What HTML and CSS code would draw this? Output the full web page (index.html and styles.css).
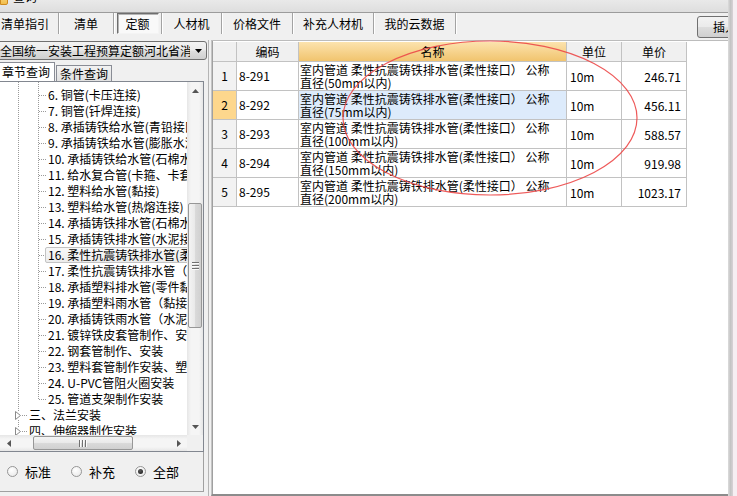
FILE: index.html
```html
<!DOCTYPE html>
<html lang="zh-CN">
<head>
<meta charset="utf-8">
<title>查询</title>
<link rel="stylesheet" href="styles.css">
</head>
<body>
<div class="screen">
  <div class="window">
    <div class="titlebar">
      <span class="app-icon"></span>
      <span class="title-text">查询</span>
    </div>
    <div class="tabbar">
      <div class="tab t1">清单指引</div>
      <div class="tab t2">清单</div>
      <div class="tab t3"><span class="tab-pressed">定额</span></div>
      <div class="tab t4">人材机</div>
      <div class="tab t5">价格文件</div>
      <div class="tab t6">补充人材机</div>
      <div class="tab t7">我的云数据</div>
      <button class="insert-btn">插入</button>
    </div>
    <div class="main">
      <div class="left">
        <div class="combo">
          <span class="combo-text">全国统一安装工程预算定额河北省消耗量定额</span>
          <svg class="combo-arrow" width="7" height="4" viewBox="0 0 7 4"><polygon points="0,0 7,0 3.5,4" fill="#000"/></svg>
        </div>
        <div class="subtabs">
          <div class="subtab active">章节查询</div>
          <div class="subtab">条件查询</div>
        </div>
        <div class="treebox">
          <div class="tree-row">
            <div class="tree-view">
              <div class="children">
                <div class="leaf">6. 铜管(卡压连接)</div>
                <div class="leaf">7. 铜管(钎焊连接)</div>
                <div class="leaf">8. 承插铸铁给水管(青铅接口)</div>
                <div class="leaf">9. 承插铸铁给水管(膨胀水泥接口)</div>
                <div class="leaf">10. 承插铸铁给水管(石棉水泥接口)</div>
                <div class="leaf">11. 给水复合管(卡箍、卡套连接)</div>
                <div class="leaf">12. 塑料给水管(黏接)</div>
                <div class="leaf">13. 塑料给水管(热熔连接)</div>
                <div class="leaf">14. 承插铸铁排水管(石棉水泥接口)</div>
                <div class="leaf">15. 承插铸铁排水管(水泥接口)</div>
                <div class="leaf selected"><span class="sel">16. 柔性抗震铸铁排水管(柔性接口)</span></div>
                <div class="leaf">17. 柔性抗震铸铁排水管（法兰接口）</div>
                <div class="leaf">18. 承插塑料排水管(零件黏接)</div>
                <div class="leaf">19. 承插塑料雨水管（黏接）</div>
                <div class="leaf">20. 承插铸铁雨水管（水泥接口）</div>
                <div class="leaf">21. 镀锌铁皮套管制作、安装</div>
                <div class="leaf">22. 钢套管制作、安装</div>
                <div class="leaf">23. 塑料套管制作安装、塑料管</div>
                <div class="leaf">24. U-PVC管阻火圈安装</div>
                <div class="leaf">25. 管道支架制作安装</div>
              </div>
              <div class="node">
                <svg class="expander" width="6" height="9" viewBox="0 0 6 9"><polygon points="0.5,0.5 5.5,4.5 0.5,8.5" fill="#fff" stroke="#8a8a8a"/></svg>
                <span class="node-dots"></span>
                <span class="node-text">三、法兰安装</span>
              </div>
              <div class="node">
                <svg class="expander" width="6" height="9" viewBox="0 0 6 9"><polygon points="0.5,0.5 5.5,4.5 0.5,8.5" fill="#fff" stroke="#8a8a8a"/></svg>
                <span class="node-dots"></span>
                <span class="node-text">四、伸缩器制作安装</span>
              </div>
            </div>
            <div class="vscroll">
              <div class="sbtn"><svg width="7" height="4" viewBox="0 0 7 4"><polygon points="0,4 7,4 3.5,0" fill="#555"/></svg></div>
              <div class="vtrack-a"></div>
              <div class="vthumb"><span class="vgrip"></span></div>
              <div class="vtrack-b"></div>
              <div class="sbtn"><svg width="7" height="4" viewBox="0 0 7 4"><polygon points="0,0 7,0 3.5,4" fill="#555"/></svg></div>
            </div>
          </div>
          <div class="hscroll-row">
            <div class="hscroll">
              <div class="sbtn-h"><svg width="4" height="7" viewBox="0 0 4 7"><polygon points="4,0 4,7 0,3.5" fill="#555"/></svg></div>
              <div class="htrack-a"></div>
              <div class="hthumb"><span class="hgrip"></span></div>
              <div class="htrack-b"></div>
              <div class="sbtn-h"><svg width="4" height="7" viewBox="0 0 4 7"><polygon points="0,0 0,7 4,3.5" fill="#555"/></svg></div>
            </div>
            <div class="corner"></div>
          </div>
        </div>
        <div class="radios">
          <label class="radio"><span class="circle"></span><span>标准</span></label>
          <label class="radio"><span class="circle"></span><span>补充</span></label>
          <label class="radio"><span class="circle checked"><span class="pip"></span></span><span>全部</span></label>
        </div>
      </div>
      <div class="right">
        <div class="gridwrap">
          <table class="grid">
            <colgroup>
              <col class="c-num"><col class="c-code"><col class="c-name"><col class="c-unit"><col class="c-price">
            </colgroup>
            <thead>
              <tr><th></th><th>编码</th><th class="sorted">名称</th><th>单位</th><th>单价</th></tr>
            </thead>
            <tbody>
              <tr><td class="num">1</td><td class="code">8-291</td><td class="name">室内管道 柔性抗震铸铁排水管(柔性接口） 公称<br>直径(50mm以内)</td><td class="unit">10m</td><td class="price">246.71</td></tr>
              <tr class="current"><td class="num">2</td><td class="code">8-292</td><td class="name">室内管道 柔性抗震铸铁排水管(柔性接口） 公称<br>直径(75mm以内)</td><td class="unit">10m</td><td class="price">456.11</td></tr>
              <tr><td class="num">3</td><td class="code">8-293</td><td class="name">室内管道 柔性抗震铸铁排水管(柔性接口） 公称<br>直径(100mm以内)</td><td class="unit">10m</td><td class="price">588.57</td></tr>
              <tr><td class="num">4</td><td class="code">8-294</td><td class="name">室内管道 柔性抗震铸铁排水管(柔性接口） 公称<br>直径(150mm以内)</td><td class="unit">10m</td><td class="price">919.98</td></tr>
              <tr><td class="num">5</td><td class="code">8-295</td><td class="name">室内管道 柔性抗震铸铁排水管(柔性接口） 公称<br>直径(200mm以内)</td><td class="unit">10m</td><td class="price">1023.17</td></tr>
            </tbody>
          </table>
        </div>
      </div>
    </div>
  </div>
  <div class="edge"></div>
  <div class="desk"></div>
  <svg class="annot" width="737" height="496" viewBox="0 0 737 496">
    <ellipse cx="490" cy="118" rx="147" ry="77" fill="none" stroke="#ec4848" stroke-width="1.2" stroke-opacity="0.9"/>
  </svg>
</div>
</body>
</html>
```

FILE: styles.css
```css
* { box-sizing: border-box; }

html, body {
  margin: 0;
  padding: 0;
}

body {
  background: #f6eef2;
  font-family: "Noto Sans CJK SC", "Noto Sans", sans-serif;
  font-size: 12px;
  color: #000;
}

.screen {
  position: relative;
  width: 737px;
  height: 496px;
  display: flex;
  overflow: hidden;
}

.window {
  width: 728px;
  height: 496px;
  flex: none;
  background: #f0f0f0;
  display: flex;
  flex-direction: column;
  overflow: hidden;
}

.edge {
  width: 5px;
  flex: none;
  background: linear-gradient(to right, #dcdcdc, #c4c4c4 50%, #d8d2d6);
}

.desk {
  flex: 1;
  background: #f6eef2;
}

/* title bar */
.titlebar {
  height: 13px;
  flex: none;
  border-bottom: 1px solid #9c9c9c;
  background: linear-gradient(#e9e9e9, #dedede);
  display: flex;
  align-items: flex-start;
  overflow: hidden;
}

.app-icon {
  width: 8px;
  height: 14px;
  margin-top: -9px;
  border: 1px solid #cf8a1e;
  border-radius: 0 0 2px 0;
  background: linear-gradient(#fbe39a, #f2bd4a);
  flex: none;
}

.title-text {
  margin-left: 5px;
  margin-top: -10px;
  line-height: 14px;
  font-size: 12px;
}

/* tab bar */
.tabbar {
  height: 27px;
  flex: none;
  display: flex;
  align-items: flex-start;
}

.tab {
  flex: none;
  height: 21px;
  line-height: 21px;
  text-align: center;
  border-right: 1px solid #a3a3a3;
  box-shadow: 1px 0 0 #ffffff;
  white-space: nowrap;
}

.t1 { width: 67px; margin-left: -8px; }
.t2 { width: 55px; }
.t3 { width: 48px; }
.t4 { width: 60px; }
.t5 { width: 71px; }
.t6 { width: 81px; }
.t7 { width: 82px; }

.tab-pressed {
  display: inline-block;
  width: 42px;
  height: 21px;
  line-height: 19px;
  border: 1px solid;
  border-color: #6e6e6e #f4f4f4 #f4f4f4 #6e6e6e;
  background: #f9f9f9;
  box-shadow: inset 1px 1px 0 #b5b5b5;
}

.insert-btn {
  flex: none;
  margin-left: auto;
  margin-right: -30px;
  margin-top: 3px;
  width: 61px;
  height: 22px;
  padding: 0 0 0 15px;
  text-align: left;
  border: 1px solid #707070;
  border-radius: 3px;
  background: linear-gradient(#f3f3f3 0%, #ebebeb 48%, #dddddd 52%, #cfcfcf 100%);
  font-family: inherit;
  font-size: 12px;
  line-height: 20px;
  color: #000;
}

/* main */
.main {
  flex: 1;
  min-height: 0;
  display: flex;
}

.left {
  width: 209px;
  flex: none;
  border-right: 1px solid #b4b4b4;
  display: flex;
  flex-direction: column;
}

.combo {
  margin: 1px 0 0 -3px;
  width: 210px;
  height: 19px;
  flex: none;
  border: 1px solid #707070;
  border-radius: 3px;
  background: linear-gradient(#f3f3f3 0%, #ebebeb 45%, #dddddd 55%, #cfcfcf 100%);
  display: flex;
  align-items: center;
}

.combo-text {
  flex: 1;
  min-width: 0;
  overflow: hidden;
  white-space: nowrap;
  padding-left: 2px;
  line-height: 17px;
}

.combo-arrow {
  flex: none;
  margin: 0 4px 0 5px;
}

.subtabs {
  height: 19px;
  margin-top: 2px;
  flex: none;
  display: flex;
  align-items: flex-end;
}

.subtab {
  width: 56px;
  height: 16px;
  margin-left: 1px;
  border: 1px solid #898c95;
  border-bottom: none;
  background: linear-gradient(#f2f2f2, #e1e1e1);
  text-align: center;
  line-height: 15px;
  white-space: nowrap;
}

.subtab.active {
  height: 19px;
  margin-left: -1px;
  background: #ffffff;
  text-align: left;
  padding-left: 2px;
  line-height: 18px;
}

/* tree */
.treebox {
  margin-left: -1px;
  width: 205px;
  height: 371px;
  flex: none;
  border: 1px solid #828790;
  background: #ffffff;
  display: flex;
  flex-direction: column;
}

.tree-row {
  height: 353px;
  display: flex;
}

.tree-view {
  width: 187px;
  flex: none;
  overflow: hidden;
  background: repeating-linear-gradient(to bottom, #9a9a9a 0 1px, transparent 1px 2px) 18px 0 / 1px 100% no-repeat;
}

.children {
  padding-top: 5px;
  background: repeating-linear-gradient(to bottom, #9a9a9a 0 1px, transparent 1px 2px) 38px 0 / 1px calc(100% - 8px) no-repeat;
}

.leaf {
  height: 16px;
  line-height: 16px;
  padding-left: 48px;
  white-space: nowrap;
  background: repeating-linear-gradient(to right, #9a9a9a 0 1px, transparent 1px 2px) 39px 8px / 7px 1px no-repeat;
}

.sel {
  display: inline-block;
  height: 16px;
  line-height: 14px;
  margin-left: -3px;
  padding: 0 40px 0 2px;
  border: 1px solid #c3c3c3;
  border-radius: 2px;
  background: linear-gradient(#f8f8f8, #ececec);
}

.node {
  height: 16px;
  display: flex;
  align-items: center;
  white-space: nowrap;
}

.expander {
  flex: none;
  margin-left: 15px;
  background: #fff;
}

.node-dots {
  width: 6px;
  height: 1px;
  flex: none;
  margin-left: 1px;
  background: repeating-linear-gradient(to right, #9a9a9a 0 1px, transparent 1px 2px);
}

.node-text {
  margin-left: 1px;
  line-height: 16px;
}

/* scrollbars */
.vscroll {
  width: 16px;
  flex: none;
  display: flex;
  flex-direction: column;
  background: linear-gradient(to right, #e6e6e6, #f5f5f5 25%, #f5f5f5 75%, #e6e6e6);
}

.sbtn {
  height: 17px;
  flex: none;
  display: flex;
  align-items: center;
  justify-content: center;
}

.vtrack-a { height: 104px; flex: none; }
.vtrack-b { flex: 1; }

.vthumb {
  height: 125px;
  flex: none;
  margin: 0 1px;
  border: 1px solid #979797;
  border-radius: 2px;
  background: linear-gradient(to right, #f4f4f4, #e9e9e9 50%, #dadada 52%, #d0d0d0);
  display: flex;
  align-items: center;
  justify-content: center;
}

.vgrip {
  width: 7px;
  height: 8px;
  background: repeating-linear-gradient(to bottom, #707070 0 1px, #fbfbfb 1px 2px, transparent 2px 3px);
}

.hscroll-row {
  height: 16px;
  display: flex;
}

.hscroll {
  width: 187px;
  flex: none;
  display: flex;
  background: linear-gradient(#e6e6e6, #f5f5f5 25%, #f5f5f5 75%, #e6e6e6);
}

.sbtn-h {
  width: 17px;
  flex: none;
  display: flex;
  align-items: center;
  justify-content: center;
}

.htrack-a { width: 16px; flex: none; }
.htrack-b { flex: 1; }

.hthumb {
  width: 100px;
  flex: none;
  margin: 1px 0;
  border: 1px solid #979797;
  border-radius: 2px;
  background: linear-gradient(#f4f4f4, #e9e9e9 50%, #dadada 52%, #d0d0d0);
  display: flex;
  align-items: center;
  justify-content: center;
}

.hgrip {
  width: 8px;
  height: 7px;
  background: repeating-linear-gradient(to right, #707070 0 1px, #fbfbfb 1px 2px, transparent 2px 3px);
}

.corner {
  flex: 1;
  background: #f0f0f0;
}

/* radios */
.radios {
  width: 204px;
  height: 40px;
  flex: none;
  border-right: 1px solid #a0a0a0;
  border-bottom: 1px solid #a0a0a0;
  display: flex;
  align-items: center;
  padding-left: 7px;
  gap: 20px;
}

.radio {
  display: flex;
  align-items: center;
  gap: 7px;
  font-size: 13px;
  line-height: 16px;
}

.circle {
  width: 11px;
  height: 11px;
  border: 1px solid #969696;
  border-radius: 50%;
  background: radial-gradient(circle at 40% 35%, #ffffff, #e6e6e6);
  display: flex;
  align-items: center;
  justify-content: center;
}

.pip {
  width: 5px;
  height: 5px;
  border-radius: 50%;
  background: radial-gradient(circle at 40% 35%, #5a5a5a, #151515);
}

/* right panel */
.right {
  flex: 1;
  min-width: 0;
  margin-left: 2px;
  background: #ffffff;
  border-left: 1px solid #c4c4c4;
  border-top: 1px solid #bcbcbc;
  border-bottom: 2px solid #8c8c8c;
}

.gridwrap {
  height: 100%;
  border-left: 1px solid #a0a0a0;
  padding-top: 1px;
}

.grid {
  border-collapse: separate;
  border-spacing: 0;
  table-layout: fixed;
  width: 474px;
}

.c-num { width: 24px; }
.c-code { width: 62px; }
.c-name { width: 268px; }
.c-unit { width: 55px; }
.c-price { width: 65px; }

.grid th,
.grid td {
  padding: 0;
  border-right: 1px solid #c2c2c2;
  border-bottom: 1px solid #c2c2c2;
  white-space: nowrap;
  overflow: hidden;
}

.grid th {
  height: 20px;
  font-weight: normal;
  font-size: 12px;
  line-height: 19px;
  background: #f0f0f0;
  text-align: center;
}

.grid th.sorted {
  background: linear-gradient(#fce3ae, #f1c46e);
}

.grid td {
  height: 29px;
  line-height: 16px;
  vertical-align: middle;
}

.grid td.num {
  text-align: center;
  background: #f2f2f2;
}

.grid td.code {
  padding-left: 2px;
}

.grid td.name {
  padding-left: 1px;
  line-height: 13px;
}

.grid td.unit {
  padding-left: 3px;
  padding-top: 2px;
}

.grid td.price {
  text-align: right;
  padding-right: 5px;
  padding-top: 2px;
}

.grid tr.current td.num {
  background: #fdd78d;
}

.grid tr.current td.name {
  background: #ddebfb;
}

/* annotation */
.annot {
  position: absolute;
  left: 0;
  top: 0;
  pointer-events: none;
}
```
